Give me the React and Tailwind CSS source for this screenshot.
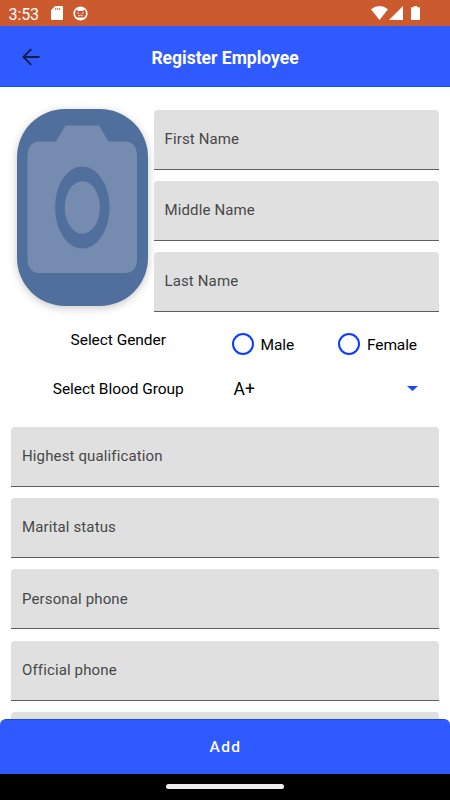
const NAME_FIELDS = ['First Name', 'Middle Name', 'Last Name']

const DETAIL_FIELDS = ['Highest qualification', 'Marital status', 'Personal phone', 'Official phone', '']

function StatusBar() {
  return (
    <div className="flex h-[26px] shrink-0 items-center bg-[#cb5a2e] pl-[8.5px] pr-[30px] text-white">
      <span className="w-[42px] pt-[3px] text-[16px] leading-[23px] tracking-[-0.1px]">3:53</span>
      {/* SD card */}
      <svg className="h-[14px] w-[12px]" viewBox="0 0 12 14" fill="currentColor">
        <path fillRule="evenodd" d="M4.2 0H10.8Q12 0 12 1.2V12.8Q12 14 10.8 14H1.2Q0 14 0 12.8V4.2ZM4.3 2V4H5.2V2ZM6.3 2V4H7.2V2ZM8.3 2V4H9.2V2Z" />
      </svg>
      {/* Debug notification */}
      <svg className="ml-[10.5px] h-[15px] w-[15px]" viewBox="0 0 15 15">
        <circle cx="7.5" cy="7.5" r="7.1" fill="currentColor" />
        <path
          d="M3 3.6L5.2 5H9.8L12 3.6L12.8 6.2L13 8.8L11.2 11.4H3.8L2 8.8L2.2 6.2Z"
          fill="#cb5a2e"
        />
        <path d="M4.2 6.6L6 7.5M10.8 6.6L9 7.5M5.2 9.8L7.5 9L9.8 9.8" stroke="currentColor" strokeWidth="0.8" fill="none" />
      </svg>
      <svg className="ml-auto h-[14px] w-[17px]" viewBox="0 0 17 14" fill="currentColor">
        <path d="M0 3.2Q8.5 -3.2 17 3.2L8.5 14Z" />
      </svg>
      <svg className="ml-[1px] h-[14px] w-[14px]" viewBox="0 0 14 14" fill="currentColor">
        <path d="M14 0V14H0Z" />
      </svg>
      <svg className="ml-[8px] h-[14px] w-[9px]" viewBox="0 0 9 14" fill="currentColor">
        <path d="M2.8 0H6.2V1.3H8.2Q9 1.3 9 2.1V13.2Q9 14 8.2 14H0.8Q0 14 0 13.2V2.1Q0 1.3 0.8 1.3H2.8Z" />
      </svg>
    </div>
  )
}

function AppBar() {
  return (
    <header className="flex h-[61px] shrink-0 items-center border-b border-[#0b4cf5] bg-[#2f5aff] pt-[2px]">
      <button className="ml-[19px] flex w-[24px] justify-center" aria-label="Back">
        <svg className="h-[18px] w-[18px]" viewBox="0 0 18 18" fill="none" stroke="#101c4d" strokeWidth="1.9">
          <path d="M17.5 9H1.4M9.2 1.2L1.4 9L9.2 16.8" />
        </svg>
      </button>
      <h1 className="flex-1 pt-[2px] pr-[43px] text-center text-[17.5px] font-bold text-white">Register Employee</h1>
    </header>
  )
}

function PhotoPicker() {
  return (
    <button
      className="mt-[-0.4px] h-[197px] w-[131px] shrink-0 overflow-hidden rounded-[48px] bg-[#516f9c] shadow-[0_2px_8px_rgba(0,0,0,0.22)]"
      aria-label="Add photo"
    >
      <svg className="h-full w-full" viewBox="0 0 131 197">
        <path
          d="M48.5 16.5H82L91.5 32.5H108Q120 32.5 120 48V149Q120 164 108 164H22.5Q10.5 164 10.5 149V48Q10.5 32.5 22.5 32.5H39Z"
          fill="#768bb0"
        />
        <ellipse cx="65.3" cy="98.5" rx="27.3" ry="41" fill="#516f9c" />
        <ellipse cx="65.3" cy="98.5" rx="17.6" ry="26.2" fill="#768bb0" />
      </svg>
    </button>
  )
}

function Field({ label }) {
  return (
    <div className="flex h-[60px] shrink-0 items-center rounded-t-[4px] border-b border-[#5f5f5f] bg-[#e0e0e0] px-[11px] text-[15px] tracking-[0.13px] text-[#484848]">
      {label}
    </div>
  )
}

function Radio({ label }) {
  return (
    <label className="flex items-center gap-[7px] text-[15.5px]">
      <span className="h-[22px] w-[22px] rounded-full border-2 border-[#0b3dff]" />
      <span className="pt-[2px] tracking-[-0.1px]">{label}</span>
    </label>
  )
}

export default function App() {
  return (
    <div className="flex h-[800px] w-[450px] flex-col overflow-hidden bg-white font-['Roboto',sans-serif] text-black">
      <StatusBar />
      <AppBar />

      <main className="flex min-h-0 flex-1 flex-col overflow-hidden px-[11px] pt-[22.6px]">
        <div className="flex shrink-0 gap-[6px] pl-[5.5px]">
          <PhotoPicker />
          <div className="flex flex-1 flex-col gap-[11.3px]">
            {NAME_FIELDS.map((label) => (
              <Field key={label} label={label} />
            ))}
          </div>
        </div>

        {/* Gender */}
        <div className="mt-[19.5px] flex h-[25px] shrink-0 items-center">
          <span className="w-[220.5px] pb-[8px] text-center text-[15.5px] tracking-[-0.05px]">
            <span className="pr-[6px]">Select Gender</span>
          </span>
          <Radio label="Male" />
          <div className="ml-auto pr-[22px]">
            <Radio label="Female" />
          </div>
        </div>

        {/* Blood group */}
        <div className="mt-[19.5px] flex h-[25px] shrink-0 items-center">
          <span className="w-[222.5px] pr-[8px] pt-[2px] text-center text-[15.5px] tracking-[-0.05px]">
            Select Blood Group
          </span>
          <button className="flex flex-1 items-center justify-between pr-[21px] text-[17.5px]">
            <span className="pt-[1px]">A+</span>
            <svg className="h-[5px] w-[11px]" viewBox="0 0 11 5" fill="#1f46ff">
              <path d="M0 0H11L5.5 5Z" />
            </svg>
          </button>
        </div>

        <div className="mt-[25.8px] flex flex-col gap-[11.2px]">
          {DETAIL_FIELDS.map((label) => (
            <Field key={label} label={label} />
          ))}
        </div>
      </main>

      <div className="relative -mt-[8px] shrink-0">
        <button className="block h-[55px] w-full rounded-t-[6px] border-t border-[#1b49ee] bg-[#2f5aff] pt-[2px] pl-[1px] text-[15.5px] font-medium tracking-[1.4px] text-white">
          Add
        </button>
      </div>
      <div className="flex h-[26px] shrink-0 justify-center bg-black pt-[10px]">
        <div className="h-[5px] w-[118px] rounded-full bg-[#eeeeee]" />
      </div>
    </div>
  )
}
